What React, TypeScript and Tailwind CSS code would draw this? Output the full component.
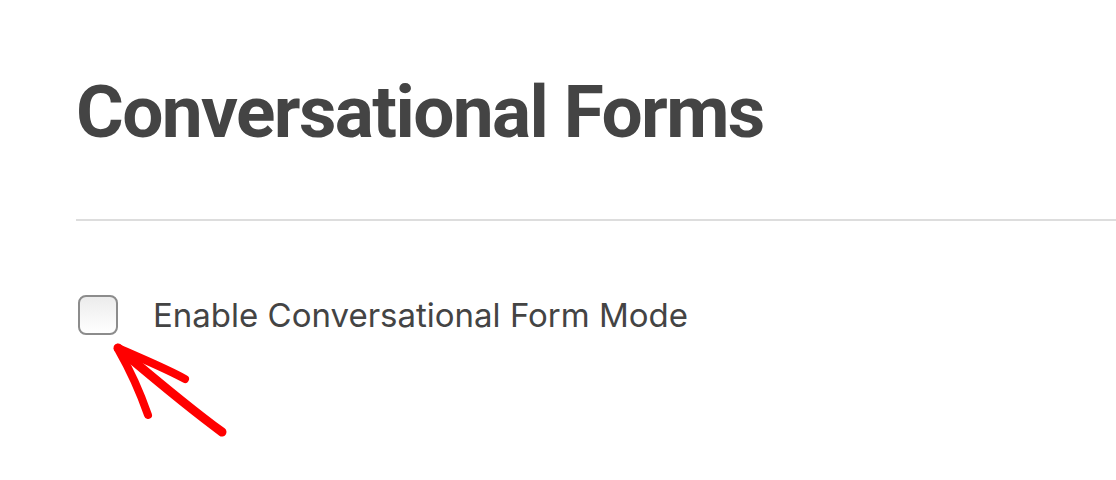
import React from 'react';

function RedArrow() {
  return (
    <svg
      className="absolute left-[100px] top-[335px] pointer-events-none"
      width="140"
      height="115"
      viewBox="100 335 140 115"
      fill="none"
    >
      {/* hand drawn annotation arrow */}
      <path
        d="M118 348 C150 375 185 405 222 432"
        stroke="#ff0000"
        strokeWidth="9"
        strokeLinecap="round"
      />
      <path
        d="M118 349 C130 370 140 392 148 415"
        stroke="#ff0000"
        strokeWidth="8"
        strokeLinecap="round"
      />
      <path
        d="M118 348 C140 358 165 368 185 379"
        stroke="#ff0000"
        strokeWidth="8"
        strokeLinecap="round"
      />
    </svg>
  );
}

export default function App() {
  return (
    <div className="relative w-[1116px] h-[480px] bg-white overflow-hidden text-[#444444]">
      <div className="pl-[76px] pt-[72px]">
        <h1 className="font-['Roboto',Arial,sans-serif] text-[73px] leading-[80px] font-bold tracking-[-1.6px]">Conversational Forms</h1>

        <div className="mt-[67px] h-[2px] bg-[#dddddd]" />

        <label className="mt-[74px] flex items-center gap-[35px]">
          <span className="ml-[2px] w-[40px] h-[40px] rounded-[8px] border-2 border-[#8c8c8c] bg-gradient-to-b from-[#ececec] to-white" />
          <span className="font-['Inter',Arial,sans-serif] text-[33px] leading-[40px]">Enable Conversational Form Mode</span>
        </label>
      </div>
      <RedArrow />
    </div>
  );
}
